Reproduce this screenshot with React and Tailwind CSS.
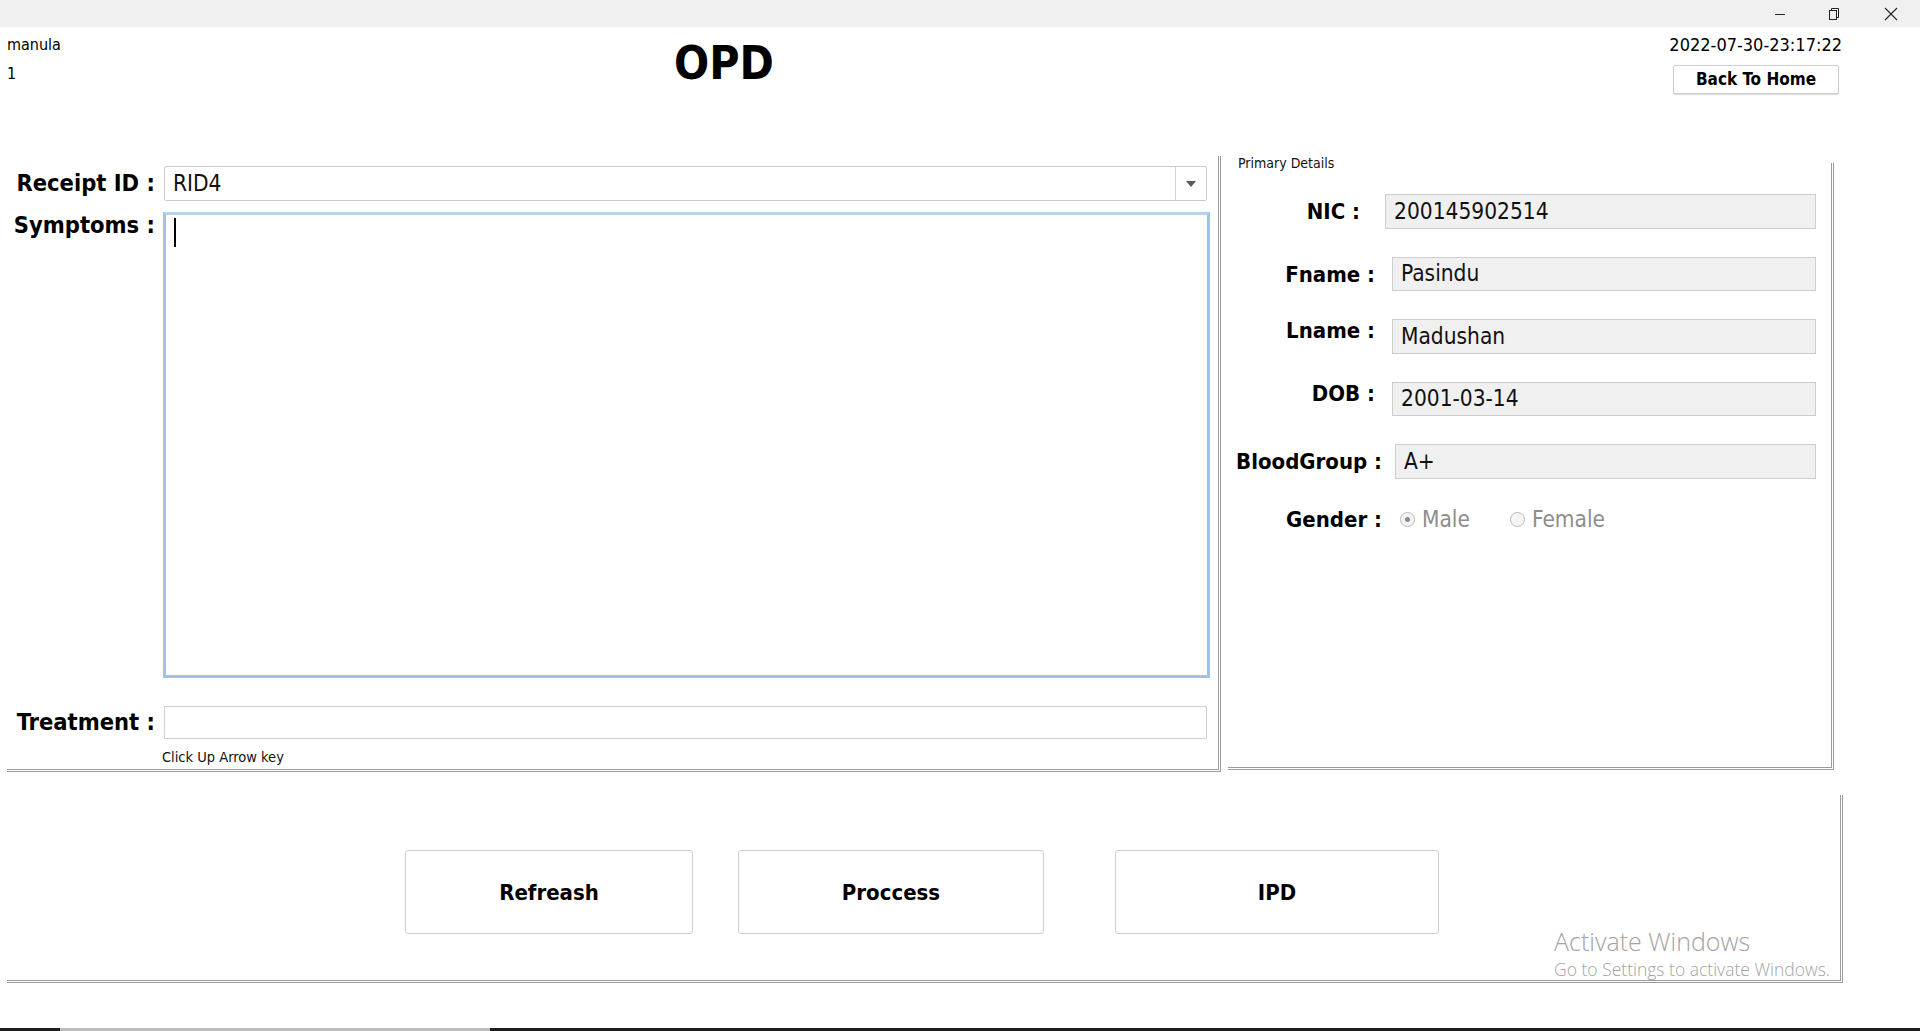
import React from 'react';

const font = "font-['DejaVu_Sans_Condensed','DejaVu_Sans',sans-serif]";

const DetailRow = ({ label, value, labelW, gap, h, className = '', labelClass = '' }) => (
  <div className={`flex items-center ${className}`}>
    <div className={`shrink-0 text-right text-[22px] font-bold text-black ${labelClass}`} style={{ width: labelW }}>
      {label}
    </div>
    <div
      className="flex items-center border border-[#cdcdcd] bg-[#f0f0f0] pl-[8px] text-[22.5px] text-[#111]"
      style={{ marginLeft: gap, height: h, width: 1819 - 1231 - labelW - gap }}
    >
      {value}
    </div>
  </div>
);

const Radio = ({ checked, label }) => (
  <div className="flex items-center gap-[7px]">
    <span className="flex h-[15px] w-[15px] items-center justify-center rounded-full border border-[#b9b9b9] bg-[#f4f4f4]">
      {checked && <span className="h-[5px] w-[5px] rounded-full bg-[#8a8a8a]" />}
    </span>
    <span className="text-[22.5px] text-[#8d8d8d]">{label}</span>
  </div>
);

const ActionButton = ({ children, width }) => (
  <button
    className="flex h-[84px] items-center justify-center rounded-[3px] border border-[#cfcfcf] bg-white text-[22px] font-bold text-black"
    style={{ width }}
  >
    {children}
  </button>
);

export default function App() {
  return (
    <div className={`relative flex h-[1031px] w-[1920px] flex-col overflow-hidden bg-white ${font}`}>
      {/* window title bar */}
      <div className="flex h-[27px] shrink-0 items-center justify-end bg-[#f0f0f0] pr-[22px] text-[#222]">
        <svg width="12" height="12" viewBox="0 0 12 12" className="mr-[42px]">
          <path d="M1 6.5h10" stroke="#222" strokeWidth="1" />
        </svg>
        <svg width="12" height="14" viewBox="0 0 12 14" className="mr-[44px]">
          <rect x="1.5" y="3.5" width="7" height="9" fill="none" stroke="#222" />
          <path d="M3.5 3.5V1.5h7v9h-2" fill="none" stroke="#222" />
        </svg>
        <svg width="14" height="14" viewBox="0 0 14 14">
          <path d="M1 1l12 12M13 1L1 13" stroke="#222" strokeWidth="1.1" />
        </svg>
      </div>

      {/* header */}
      <div className="flex h-[129px] shrink-0">
        <div className="w-[674px] pl-[7px] pt-[3px] text-[16px] leading-[29px] text-black">
          <div>manula</div>
          <div>1</div>
        </div>
        <div className="pt-[8px] text-[46px] font-bold leading-[56px] text-black">OPD</div>
        <div className="ml-auto mr-[78px] flex flex-col items-end pt-[7px]">
          <div className="text-[18px] leading-[21px] text-black">2022-07-30-23:17:22</div>
          <button className="mt-[10px] mr-[3px] h-[29px] w-[166px] rounded-[2px] border border-[#cfcfcf] bg-white text-[17px] font-bold text-black shadow-[0_1px_1px_#d8d8d8]">
            Back To Home
          </button>
        </div>
      </div>

      {/* main content */}
      <div className="flex shrink-0">
        {/* left panel */}
        <div className="ml-[7px] flex h-[616px] w-[1214px] flex-col border-r-[3px] border-b-[3px] border-double border-[#9c9c9c] pt-[10px]">
          <div className="flex items-center">
            <div className="w-[148px] text-right text-[23.5px] font-bold text-black">Receipt ID :</div>
            <div className="ml-[9px] flex h-[35px] w-[1043px] items-stretch rounded-[2px] border border-[#cbcbcb] bg-white">
              <div className="flex flex-1 items-center pl-[8px] text-[22.5px] text-[#111]">RID4</div>
              <div className="flex w-[31px] items-center justify-center border-l border-[#d4d4d4]">
                <svg width="10" height="6" viewBox="0 0 10 6">
                  <path d="M0 0h10L5 6z" fill="#5a5a5a" />
                </svg>
              </div>
            </div>
          </div>

          <div className="mt-[11px] flex">
            <div className="-mt-[4px] w-[148px] text-right text-[23.5px] font-bold text-black">Symptoms :</div>
            <div className="ml-[8px] h-[466px] w-[1047px] border-[3px] border-[#9fc3e4] border-t-[#b7d3ec] bg-white pl-[8px] pt-[3px]">
              <div className="h-[29px] w-[2px] bg-black" />
            </div>
          </div>

          <div className="mt-[27px] flex items-center">
            <div className="w-[148px] text-right text-[23.5px] font-bold text-black">Treatment :</div>
            <div className="ml-[9px] h-[33px] w-[1043px] border border-[#cfcfcf] bg-white" />
          </div>
          <div className="ml-[155px] mt-[6px] text-[14.5px] text-[#111]">Click Up Arrow key</div>
        </div>

        {/* right panel */}
        <div className="ml-[7px] mt-[7px] flex h-[607px] w-[606px] flex-col border-r-[3px] border-b-[3px] border-double border-[#9c9c9c]">
          <div className="-mt-[9px] ml-[10px] text-[14px] leading-[18px] text-[#111]">Primary Details</div>
          <DetailRow className="mt-[22px]" label="NIC :" value="200145902514" labelW={132} gap={25} h={35} />
          <DetailRow className="mt-[28px]" label="Fname :" value="Pasindu" labelW={147} gap={17} h={34} />
          <DetailRow className="mt-[28px]" label="Lname :" value="Madushan" labelW={147} gap={17} h={35} labelClass="-mt-[12px]" />
          <DetailRow className="mt-[28px]" label="DOB :" value="2001-03-14" labelW={147} gap={17} h={34} labelClass="-mt-[12px]" />
          <DetailRow className="mt-[28px]" label="BloodGroup :" value="A+" labelW={154} gap={13} h={35} />
          <div className="mt-[24px] flex items-center">
            <div className="w-[154px] text-right text-[22px] font-bold text-black">Gender :</div>
            <div className="ml-[18px] flex items-center gap-[40px]">
              <Radio checked label="Male" />
              <Radio label="Female" />
            </div>
          </div>
        </div>
      </div>

      {/* bottom panel */}
      <div className="relative ml-[7px] mt-[23px] h-[188px] w-[1836px] shrink-0 border-r-[3px] border-b-[3px] border-double border-[#9c9c9c]">
        <div className="flex pl-[398px] pt-[55px]">
          <ActionButton width={288}>Refreash</ActionButton>
          <div className="ml-[45px]">
            <ActionButton width={306}>Proccess</ActionButton>
          </div>
          <div className="ml-[71px]">
            <ActionButton width={324}>IPD</ActionButton>
          </div>
        </div>
        <div className="absolute left-[1547px] top-[130px] font-['Open_Sans','DejaVu_Sans',sans-serif] text-[#a3a3a3]">
          <div className="text-[25px] font-light leading-[32px]">Activate Windows</div>
          <div className="text-[17.5px] font-light leading-[24px]">Go to Settings to activate Windows.</div>
        </div>
      </div>

      {/* taskbar edge */}
      <div className="mt-auto flex h-[3px] shrink-0">
        <div className="w-[60px] bg-[#1c1c1c]" />
        <div className="w-[430px] bg-[#bdbdbd]" />
        <div className="flex-1 bg-[#1c1c1c]" />
      </div>
    </div>
  );
}
